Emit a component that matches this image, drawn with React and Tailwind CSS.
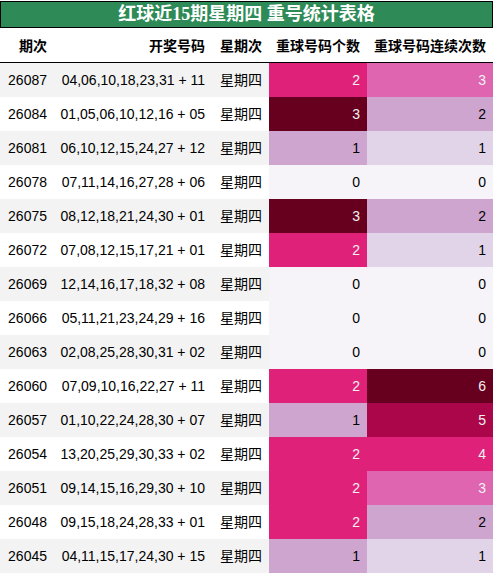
import React from 'react';

const rows = [
    ['26087', '04,06,10,18,23,31 + 11', 2, 3],
    ['26084', '01,05,06,10,12,16 + 05', 3, 2],
    ['26081', '06,10,12,15,24,27 + 12', 1, 1],
    ['26078', '07,11,14,16,27,28 + 06', 0, 0],
    ['26075', '08,12,18,21,24,30 + 01', 3, 2],
    ['26072', '07,08,12,15,17,21 + 01', 2, 1],
    ['26069', '12,14,16,17,18,32 + 08', 0, 0],
    ['26066', '05,11,21,23,24,29 + 16', 0, 0],
    ['26063', '02,08,25,28,30,31 + 02', 0, 0],
    ['26060', '07,09,10,16,22,27 + 11', 2, 6],
    ['26057', '01,10,22,24,28,30 + 07', 1, 5],
    ['26054', '13,20,25,29,30,33 + 02', 2, 4],
    ['26051', '09,14,15,16,29,30 + 10', 2, 3],
    ['26048', '09,15,18,24,28,33 + 01', 2, 2],
    ['26045', '04,11,15,17,24,30 + 15', 1, 1],
];

// PuRd gradient, count column scaled 0..3
const countColor = {
    0: 'bg-[#f7f4f9] text-black',
    1: 'bg-[#cda5cf] text-black',
    2: 'bg-[#df2179] text-[#f1f1f1]',
    3: 'bg-[#67001f] text-[#f1f1f1]',
};

// consecutive column scaled 0..6
const streakColor = {
    0: 'bg-[#f7f4f9] text-black',
    1: 'bg-[#e1d4e8] text-black',
    2: 'bg-[#cda5cf] text-black',
    3: 'bg-[#df65b0] text-[#f1f1f1]',
    4: 'bg-[#df2179] text-[#f1f1f1]',
    5: 'bg-[#aa0649] text-[#f1f1f1]',
    6: 'bg-[#67001f] text-[#f1f1f1]',
};

const cols = 'grid grid-cols-[54px_158px_57px_98px_126px]';

const App = () => {
    return (
        <div className="w-[493px] bg-white text-[14px] text-black" style={{ fontFamily: '"Liberation Sans", "Noto Sans CJK SC", sans-serif' }}>
            <div
                className="h-[27px] mt-px border border-black bg-[#2e8b57] text-white text-[18px] font-bold flex items-center justify-center"
                style={{ fontFamily: '"Liberation Serif", "Noto Sans CJK SC", sans-serif' }}
            >
                红球近15期星期四 重号统计表格
            </div>
            <div className={`${cols} h-[35px] border-b border-black font-bold`}>
                {['期次', '开奖号码', '星期次', '重球号码个数', '重球号码连续次数'].map((h) => (
                    <div key={h} className="flex items-center justify-end pr-[7px] pt-[3px] whitespace-nowrap">
                        {h}
                    </div>
                ))}
            </div>
            {rows.map(([id, nums, count, streak], i) => (
                <div key={id} className={`${cols} h-[34px] ${i % 2 === 0 ? 'bg-[#f3f3f3]' : 'bg-white'}`}>
                    <div className="flex items-center justify-end pr-[7px]">{id}</div>
                    <div className="flex items-center justify-end pr-[7px] whitespace-nowrap">{nums}</div>
                    <div className="flex items-center justify-end pr-[7px]">星期四</div>
                    <div className={`flex items-center justify-end pr-[7px] ${countColor[count]}`}>{count}</div>
                    <div className={`flex items-center justify-end pr-[7px] ${streakColor[streak]}`}>{streak}</div>
                </div>
            ))}
        </div>
    );
};

export default App;
